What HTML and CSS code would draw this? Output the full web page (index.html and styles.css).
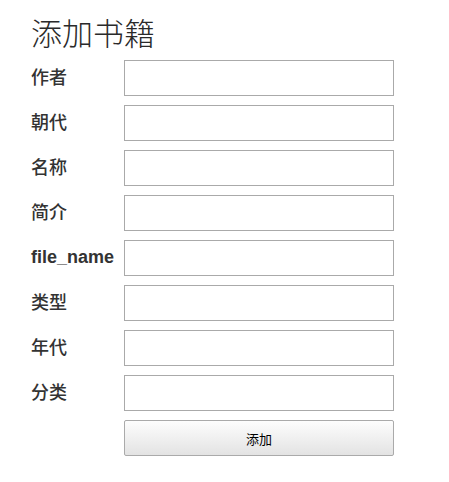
FILE: index.html
```html
<!DOCTYPE html>
<html lang="zh">
<head>
<meta charset="utf-8">
<title>添加书籍</title>
<link rel="stylesheet" href="styles.css">
</head>
<body>
<div class="page">
  <h1 class="title">添加书籍</h1>
  <form class="form">
    <label class="label">作者</label><input class="field" type="text">
    <label class="label">朝代</label><input class="field" type="text">
    <label class="label">名称</label><input class="field" type="text">
    <label class="label">简介</label><input class="field" type="text">
    <label class="label latin">file_name</label><input class="field" type="text">
    <label class="label">类型</label><input class="field" type="text">
    <label class="label">年代</label><input class="field" type="text">
    <label class="label">分类</label><input class="field" type="text">
    <span></span><button class="btn" type="button">添加</button>
  </form>
</div>
</body>
</html>
```

FILE: styles.css
```css
html, body {
  margin: 0;
  padding: 0;
  background: #fff;
}
.page {
  padding: 14px 0 0 31px;
  font-family: "Liberation Sans", "Noto Sans CJK SC", sans-serif;
  color: #333;
}
.title {
  margin: 0 0 11px 0;
  font-family: "Noto Sans CJK SC", sans-serif;
  font-weight: 300;
  font-size: 31px;
  line-height: 35px;
  color: #2a2a2a;
}
.form {
  display: grid;
  grid-template-columns: 93px 270px;
  row-gap: 9px;
  align-items: center;
}
.label {
  font-family: "Noto Sans CJK SC", sans-serif;
  font-size: 18px;
  line-height: 22px;
  font-weight: 500;
  color: #333;
  white-space: nowrap;
  padding-bottom: 4px;
}
.label.latin {
  font-family: "Liberation Sans", sans-serif;
  font-weight: 700;
  padding-bottom: 2px;
}
.field {
  box-sizing: border-box;
  width: 270px;
  height: 36px;
  margin: 0;
  border: 1px solid #aaa;
  background: #fff;
  padding: 0 6px;
}
.btn {
  box-sizing: border-box;
  width: 270px;
  height: 36px;
  margin: 0;
  border: 1px solid #aaa;
  border-radius: 2px;
  background: linear-gradient(#fdfdfd, #e3e3e3);
  font-family: "Noto Sans CJK SC", sans-serif;
  font-size: 13px;
  color: #000;
}
```
